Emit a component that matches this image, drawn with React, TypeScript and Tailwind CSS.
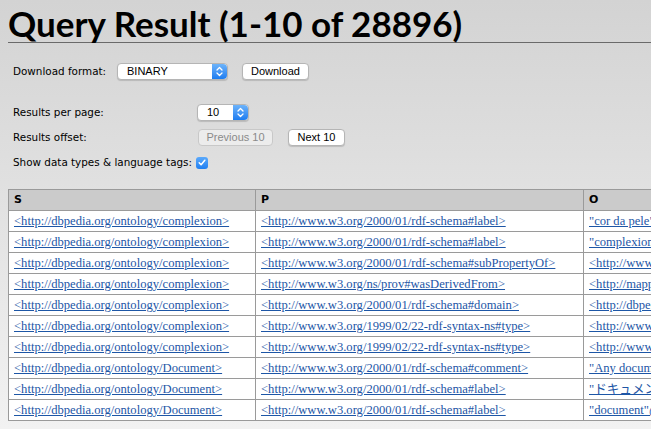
import React from "react";

const S = "<http://dbpedia.org/ontology/complexion>";
const D = "<http://dbpedia.org/ontology/Document>";
const LABEL = "<http://www.w3.org/2000/01/rdf-schema#label>";
const TYPE = "<http://www.w3.org/1999/02/22-rdf-syntax-ns#type>";

const rows: [string, string, string][] = [
  [S, LABEL, "\"cor da pele\"@pt"],
  [S, LABEL, "\"complexion\"@en"],
  [S, "<http://www.w3.org/2000/01/rdf-schema#subPropertyOf>", "<http://www.w3.org/2002/07/owl#Thing>"],
  [S, "<http://www.w3.org/ns/prov#wasDerivedFrom>", "<http://mappings.dbpedia.org/index.php/OntologyProperty:complexion>"],
  [S, "<http://www.w3.org/2000/01/rdf-schema#domain>", "<http://dbpedia.org/ontology/Person>"],
  [S, TYPE, "<http://www.w3.org/2002/07/owl#DatatypeProperty>"],
  [S, TYPE, "<http://www.w3.org/2000/01/rdf-schema#Property>"],
  [D, "<http://www.w3.org/2000/01/rdf-schema#comment>", "\"Any document\"@en"],
  [D, LABEL, "\"ドキュメント\"@ja"],
  [D, LABEL, "\"document\"@en"],
];

const Stepper = () => (
  <span className="flex h-full w-[15px] items-center justify-center rounded-r-[4px] bg-gradient-to-b from-[#6cb3fa] to-[#1a7cf0]">
    <svg width="7" height="11" viewBox="0 0 7 11" fill="none" stroke="white" strokeWidth="1.3" strokeLinecap="round" strokeLinejoin="round">
      <path d="M1 4l2.5-2.5L6 4" />
      <path d="M1 7l2.5 2.5L6 7" />
    </svg>
  </span>
);

const Select = ({ value, width }: { value: string; width: string }) => (
  <div className={`flex h-[17px] ${width} items-center justify-between rounded-[4px] border border-[#b5b5b5] bg-white pl-[9px] font-['Liberation_Sans',sans-serif] text-[11px] text-black shadow-[0_1px_1px_rgba(0,0,0,0.15)]`}>
    <span className="leading-none">{value}</span>
    <Stepper />
  </div>
);

const App: React.FC = () => {
  return (
    <div className="h-screen w-full overflow-hidden bg-gradient-to-b from-[#d3d3d3] to-[#f2f2f2] pl-2 pt-[5px] text-black">
      {/* Title */}
      <h1 className="whitespace-nowrap border-b border-[#6a6a6a] pb-[1px] font-['Lato',sans-serif] text-[35px] font-bold leading-[36px] text-black">
        Query Result (1-10 of 28896)
      </h1>

      {/* Download form */}
      <div className="mt-[20px] flex items-center whitespace-nowrap pl-[5px] font-['DejaVu_Sans',sans-serif] text-[10.4px]">
        <span className="w-[104px]">Download format:</span>
        <Select value="BINARY" width="w-[111px]" />
        <button className="ml-[14px] h-[17px] rounded-[4px] border border-[#b5b5b5] bg-white px-[8px] font-['Liberation_Sans',sans-serif] text-[11px] leading-none shadow-[0_1px_1px_rgba(0,0,0,0.15)]">
          Download
        </button>
      </div>

      {/* Paging */}
      <div className="mt-[24px] flex flex-col gap-[8px] whitespace-nowrap pl-[5px] font-['DejaVu_Sans',sans-serif] text-[10.4px]">
        <div className="flex h-[17px] items-center">
          <span className="w-[184px]">Results per page:</span>
          <Select value="10" width="w-[52px]" />
        </div>
        <div className="flex h-[17px] items-center">
          <span className="w-[185px]">Results offset:</span>
          <button className="h-[17px] w-[75px] rounded-[4px] border border-[#c8c8c8] bg-[#ececec] font-['Liberation_Sans',sans-serif] text-[11px] leading-none text-[#8a8a8a]">
            Previous 10
          </button>
          <button className="ml-[15px] h-[17px] w-[57px] rounded-[4px] border border-[#b5b5b5] bg-white font-['Liberation_Sans',sans-serif] text-[11px] leading-none shadow-[0_1px_1px_rgba(0,0,0,0.15)]">
            Next 10
          </button>
        </div>
        <div className="flex h-[17px] items-center">
          <span className="w-[183px]">Show data types &amp; language tags:</span>
          <span className="flex h-[12px] w-[12px] items-center justify-center rounded-[3px] bg-gradient-to-b from-[#5aa9fb] to-[#1e7ff2]">
            <svg width="8" height="7" viewBox="0 0 8 7" fill="none" stroke="white" strokeWidth="1.5" strokeLinecap="round" strokeLinejoin="round">
              <path d="M1.2 3.8l1.9 2L6.8 1.2" />
            </svg>
          </span>
        </div>
      </div>

      {/* Results table */}
      <table className="mt-[18px] w-[1000px] table-fixed border-collapse border border-[#9a9a9a] bg-white">
        <colgroup>
          <col className="w-[247px]" />
          <col className="w-[328px]" />
          <col />
        </colgroup>
        <thead>
          <tr className="h-[21px] bg-[#cbcbcb]">
            {["S", "P", "O"].map((h) => (
              <th key={h} className="border border-[#9a9a9a] px-[5px] text-left font-['DejaVu_Sans',sans-serif] text-[11px] font-bold">
                {h}
              </th>
            ))}
          </tr>
        </thead>
        <tbody>
          {rows.map((r, i) => (
            <tr key={i} className="h-[21px]">
              {r.map((c, j) => (
                <td key={j} className="overflow-hidden whitespace-nowrap border border-[#9a9a9a] px-[5px] font-['Liberation_Serif','Noto_Sans_CJK_JP',serif] text-[12.6px] leading-none">
                  <a href="#" className="text-[#1d56a6] underline">
                    {c}
                  </a>
                </td>
              ))}
            </tr>
          ))}
        </tbody>
      </table>
    </div>
  );
};

export default App;
